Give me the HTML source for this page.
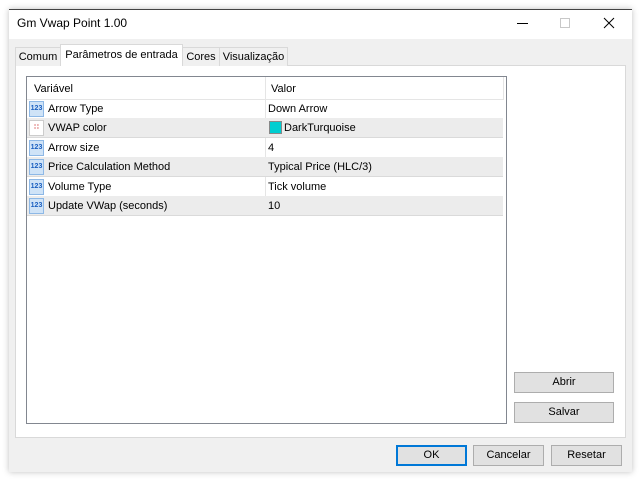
<!DOCTYPE html>
<html><head><meta charset="utf-8"><style>
*{margin:0;padding:0;box-sizing:border-box}
body{width:640px;height:480px;background:#fff;font-family:"Liberation Sans",sans-serif;font-size:11px;color:#000;position:relative;overflow:hidden}
.a{position:absolute}
.win{left:9px;top:9px;width:623px;height:463px;background:#f0f0f0;border-top:1px solid #444;box-shadow:0 0 6px rgba(0,0,0,.25)}
.title{left:9px;top:10px;width:623px;height:29px;background:#fff}
.tab{position:absolute;border:1px solid #d9d9d9;border-bottom:none;background:#f0f0f0;text-align:center;line-height:19px}
.panel{left:15px;top:65px;width:611px;height:373px;background:#fff;border:1px solid #d9d9d9}
.tbl{left:26px;top:76px;width:481px;height:348px;border:1px solid #828790;background:#fff}
.row{position:absolute;left:27px;width:476px;height:20px;border-bottom:1px solid #dadada;line-height:20px}
.g{background:#ececec}
.row span{position:absolute}
.ic{position:absolute;left:2px;top:2px;width:15px;height:16px;background:#cfe3f7;border:1px solid #8db8e6;font-size:7px;font-weight:bold;color:#1a5fc0;line-height:14px;text-align:center}
.btn{position:absolute;background:#e1e1e1;border:1px solid #adadad;text-align:center;line-height:19px}
</style></head><body>
<div class="a win"></div>
<div class="a title"></div>
<div class="a" style="left:17px;top:16px;font-size:12px">Gm Vwap Point 1.00</div>
<div class="a" style="left:517px;top:23px;width:11px;height:1px;background:#000"></div>
<div class="a" style="left:560px;top:18px;width:10px;height:10px;border:1px solid #c8c8c8"></div>
<svg class="a" style="left:603px;top:17px" width="12" height="12"><path d="M1 1L11 11M11 1L1 11" stroke="#000" stroke-width="1"/></svg>
<div class="a panel"></div>
<div class="tab" style="left:15px;top:47px;width:46px;height:19px">Comum</div>
<div class="tab" style="left:60px;top:44px;width:123px;height:22px;background:#fff;line-height:21px;z-index:2">Parâmetros de entrada</div>
<div class="tab" style="left:182px;top:47px;width:38px;height:19px">Cores</div>
<div class="tab" style="left:219px;top:47px;width:69px;height:19px">Visualização</div>
<div class="a tbl"></div>
<div class="a" style="left:27px;top:77px;width:476px;height:23px;border-bottom:1px solid #e5e5e5"></div>
<div class="a" style="left:265px;top:77px;width:1px;height:138px;background:#e5e5e5"></div>
<div class="a" style="left:503px;top:77px;width:1px;height:23px;background:#e5e5e5"></div>
<div class="a" style="left:34px;top:83px">Variável</div>
<div class="a" style="left:271px;top:83px">Valor</div>

<div class="row" style="top:99px"><div class="ic">123</div><span style="left:21px">Arrow Type</span><span style="left:241px">Down Arrow</span></div>
<div class="row g" style="top:118px"><div class="ic" style="background:#fff;border-color:#ccc;color:#c33">∷</div><span style="left:21px">VWAP color</span><span style="left:242px;top:3px;width:13px;height:13px;background:#00ced1;border:1px solid #888"></span><span style="left:257px">DarkTurquoise</span></div>
<div class="row" style="top:138px"><div class="ic">123</div><span style="left:21px">Arrow size</span><span style="left:241px">4</span></div>
<div class="row g" style="top:157px"><div class="ic">123</div><span style="left:21px">Price Calculation Method</span><span style="left:241px">Typical Price (HLC/3)</span></div>
<div class="row" style="top:177px"><div class="ic">123</div><span style="left:21px">Volume Type</span><span style="left:241px">Tick volume</span></div>
<div class="row g" style="top:196px"><div class="ic">123</div><span style="left:21px">Update VWap (seconds)</span><span style="left:241px">10</span></div>

<div class="btn" style="left:514px;top:372px;width:100px;height:21px">Abrir</div>
<div class="btn" style="left:514px;top:402px;width:100px;height:21px">Salvar</div>
<div class="btn" style="left:396px;top:445px;width:71px;height:21px;border:2px solid #0078d7;line-height:17px">OK</div>
<div class="btn" style="left:473px;top:445px;width:71px;height:21px">Cancelar</div>
<div class="btn" style="left:551px;top:445px;width:71px;height:21px">Resetar</div>
</body></html>
